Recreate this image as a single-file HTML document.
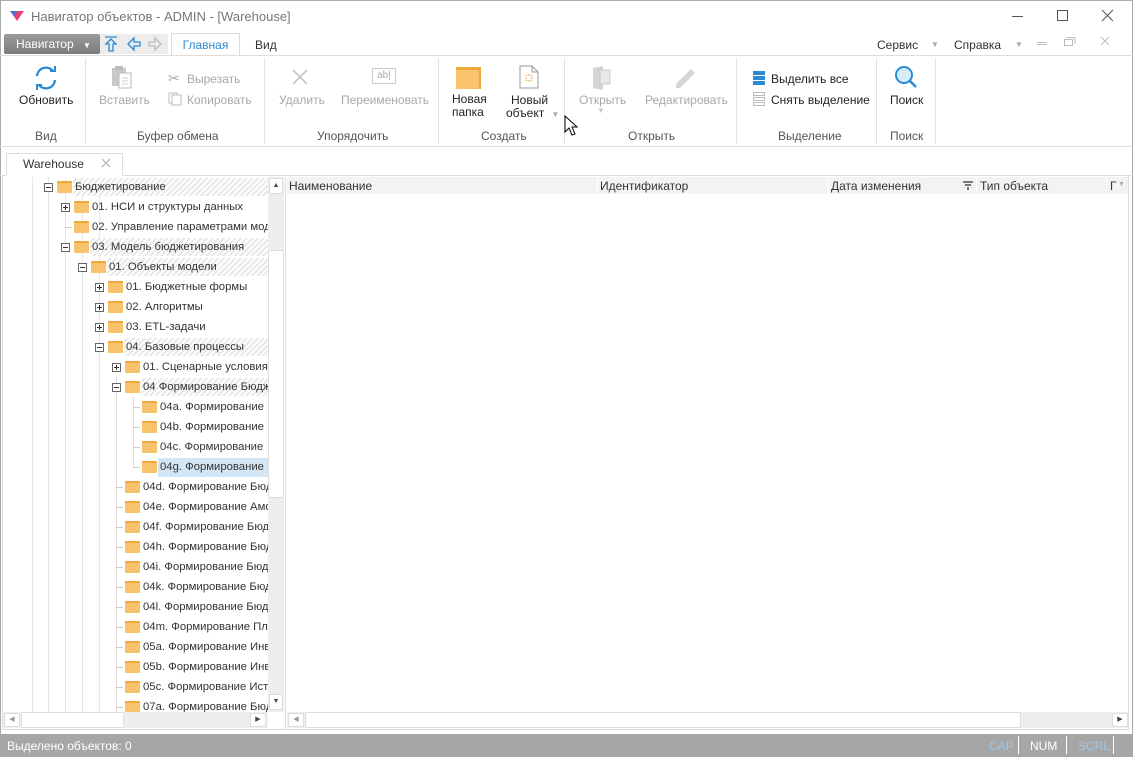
<!DOCTYPE html>
<html><head><meta charset="utf-8"><style>
*{margin:0;padding:0;box-sizing:border-box}
body{width:1133px;height:757px;overflow:hidden;background:#fff;font-family:"Liberation Sans","DejaVu Sans",sans-serif;font-size:12px;color:#333;position:relative}
.a{position:absolute;white-space:nowrap}
.g{color:#a8a8a8}
.lbl{color:#555}
.vl{position:absolute;width:1px;background:#e3e3e3}
.row{position:absolute;height:20px;line-height:20px;white-space:nowrap;font-size:11.3px}
.fold{position:absolute;width:15px;height:12px;background:#f8c36a;border-top:2px solid #f2a73a;border-radius:1px}
.exp{position:absolute;width:9px;height:9px;border:1px solid #666;background:#fff}
.exp:before{content:"";position:absolute;left:1px;top:3px;width:5px;height:1px;background:#333}
.exp.p:after{content:"";position:absolute;left:3px;top:1px;width:1px;height:5px;background:#333}
.hat{position:absolute;height:18px;background:repeating-linear-gradient(135deg,#fff 0 2px,#e8e8e8 2px 4px)}
</style></head><body>
<div class="a" style="left:0;top:0;width:1133px;height:757px;border:1px solid #aaa"></div>
<svg class="a" style="left:10px;top:10px" width="14" height="12"><polygon points="0,1 14,1 7,11" fill="#e8426b"/><polygon points="0,1 7,1 5,7" fill="#4a6fd6"/></svg>
<div class="a" style="left:31px;top:9px;font-size:13px;color:#777">Навигатор объектов - ADMIN - [Warehouse]</div>
<svg class="a" style="left:1005px;top:4px" width="120" height="24" stroke="#555" fill="none" stroke-width="1"><path d="M7 12.5h11"/><rect x="52.5" y="6.5" width="10" height="10"/><path d="M97 6l11 11M108 6l-11 11"/></svg>
<div class="a" style="left:4px;top:34px;width:96px;height:20px;background:linear-gradient(#9a9a9a,#7c7c7c);border-radius:2px;color:#fff;line-height:20px;padding-left:12px;font-size:12px">Навигатор <span style="font-size:8px;margin-left:6px">▼</span></div>
<div class="a" style="left:100px;top:34px;width:68px;height:20px;background:#ececec"></div>
<svg class="a" style="left:103px;top:35px" width="66" height="18" fill="none" stroke-width="1.3">
<path d="M2 2h12M8 4l-5 5h3v7h4v-7h3z" stroke="#2b8ad4"/>
<path d="M25 9l6-6v4h6v4h-6v4z" stroke="#2b8ad4"/>
<path d="M58 9l-6-6v4h-6v4h6v4z" stroke="#bbb"/>
</svg>
<div class="a" style="left:171px;top:33px;width:69px;height:23px;border:1px solid #ddd;border-bottom:none;background:#fff;color:#2b8ad4;text-align:center;line-height:22px">Главная</div>
<div class="a" style="left:255px;top:38px">Вид</div>
<div class="a" style="left:877px;top:38px">Сервис</div><div class="a" style="left:931px;top:40px;font-size:8px;color:#aaa">▼</div>
<div class="a" style="left:954px;top:38px">Справка</div><div class="a" style="left:1015px;top:40px;font-size:8px;color:#aaa">▼</div>
<svg class="a" style="left:1034px;top:34px" width="80" height="16" stroke="#bbb" fill="none"><path d="M3.5 8.5h9M3.5 10.5h9"/><rect x="30.5" y="5.5" width="8" height="6"/><path d="M33 3.5h8v6"/><path d="M67 3l8 8M75 3l-8 8"/></svg>
<div class="a" style="left:0;top:55px;width:1133px;height:1px;background:#ddd"></div>
<div class="vl" style="left:85px;top:58px;height:86px"></div>
<div class="vl" style="left:264px;top:58px;height:86px"></div>
<div class="vl" style="left:438px;top:58px;height:86px"></div>
<div class="vl" style="left:564px;top:58px;height:86px"></div>
<div class="vl" style="left:736px;top:58px;height:86px"></div>
<div class="vl" style="left:876px;top:58px;height:86px"></div>
<div class="vl" style="left:935px;top:58px;height:86px"></div>
<div class="a" style="left:0;top:146px;width:1133px;height:1px;background:#ddd"></div>
<svg class="a" style="left:33px;top:65px" width="26" height="26" fill="none" stroke="#2b8ad4" stroke-width="2.2"><path d="M4 11a9 9 0 0 1 16-5"/><path d="M22 15a9 9 0 0 1-16 5"/><path d="M17 6h5V1" stroke-width="2"/><path d="M9 20H4v5" stroke-width="2"/></svg>
<div class="a" style="left:19px;top:93px;color:#222">Обновить</div>
<div class="a lbl" style="left:35px;top:129px">Вид</div>
<svg class="a" style="left:111px;top:65px" width="22" height="24"><rect x="1" y="3" width="14" height="18" fill="#c8c8c8"/><rect x="4" y="1" width="8" height="4" fill="#bbb"/><rect x="8" y="8" width="12" height="15" fill="#fff" stroke="#bbb"/><path d="M11 13h6M11 16h6M11 19h6" stroke="#ccc"/></svg>
<div class="a g" style="left:99px;top:93px">Вставить</div>
<div class="a g" style="left:168px;top:70px;font-size:14px">✂</div><div class="a g" style="left:187px;top:72px">Вырезать</div>
<svg class="a" style="left:168px;top:92px" width="14" height="14" fill="#fff" stroke="#bbb"><rect x="1" y="1" width="8" height="10"/><rect x="4" y="3" width="9" height="10"/></svg><div class="a g" style="left:187px;top:93px">Копировать</div>
<div class="a lbl" style="left:137px;top:129px">Буфер обмена</div>
<svg class="a" style="left:291px;top:68px" width="18" height="18" stroke="#c4c4c4" stroke-width="1.6"><path d="M2 2l14 14M16 2L2 16"/></svg>
<div class="a g" style="left:279px;top:93px">Удалить</div>
<div class="a" style="left:372px;top:68px;width:24px;height:16px;border:1px solid #ccc;color:#aaa;font-size:10px;text-align:center;line-height:14px">ab|</div>
<div class="a g" style="left:341px;top:93px">Переименовать</div>
<div class="a lbl" style="left:317px;top:129px">Упорядочить</div>
<div class="a" style="left:456px;top:67px;width:25px;height:22px;background:#f8c36a;border-top:3px solid #f2a73a;border-right:2px solid #f2a73a"></div>
<div class="a" style="left:452px;top:93px;color:#222;line-height:13px">Новая<br>папка</div>
<svg class="a" style="left:519px;top:65px" width="20" height="24"><path d="M1 1h12l6 6v16H1z" fill="#fff" stroke="#999"/><path d="M13 1v6h6" fill="none" stroke="#999"/><path d="M10 9v2M10 15v2M6 13h2M12 13h2M7 10l1 1M13 10l-1 1M7 16l1-1M13 16l-1-1" stroke="#f2a73a"/></svg>
<div class="a" style="left:511px;top:93px;color:#222">Новый</div>
<div class="a" style="left:506px;top:106px;color:#222">объект <span style="font-size:8px;color:#aaa;margin-left:4px">▼</span></div>
<div class="a lbl" style="left:481px;top:129px">Создать</div>
<svg class="a" style="left:564px;top:115px" width="14" height="22"><path d="M1 1v16l4-4 3 7 3-1-3-7h5z" fill="#fff" stroke="#000"/></svg>
<svg class="a" style="left:591px;top:65px" width="22" height="26"><path d="M2 3l10-2v24l-10-2z" fill="#d5d5d5"/><rect x="9" y="5" width="10" height="14" fill="#e8e8e8" stroke="#ccc"/></svg>
<div class="a g" style="left:579px;top:93px">Открыть</div>
<div class="a g" style="left:597px;top:106px;font-size:8px;color:#ccc">▼</div>
<svg class="a" style="left:672px;top:64px" width="28" height="26"><path d="M4 20L19 5l4 4L8 24H4z" fill="#d5d5d5"/></svg>
<div class="a g" style="left:645px;top:93px">Редактировать</div>
<div class="a lbl" style="left:628px;top:129px">Открыть</div>
<div class="a" style="left:753px;top:71px;width:12px;height:4px;background:#2b8ad4;box-shadow:0 5px 0 #2b8ad4,0 10px 0 #2b8ad4"></div>
<div class="a" style="left:771px;top:72px;color:#222">Выделить все</div>
<div class="a" style="left:753px;top:92px;width:12px;height:4px;border:1px solid #bbb"></div>
<div class="a" style="left:753px;top:97px;width:12px;height:4px;border:1px solid #bbb"></div>
<div class="a" style="left:753px;top:102px;width:12px;height:4px;border:1px solid #bbb"></div>
<div class="a" style="left:771px;top:93px;color:#222">Снять выделение</div>
<div class="a lbl" style="left:778px;top:129px">Выделение</div>
<svg class="a" style="left:893px;top:64px" width="26" height="26"><circle cx="11" cy="11" r="8" fill="#d8ebf8" stroke="#2b8ad4" stroke-width="2"/><path d="M17 17l6 6" stroke="#2b8ad4" stroke-width="2.5"/></svg>
<div class="a" style="left:890px;top:93px;color:#222">Поиск</div>
<div class="a lbl" style="left:890px;top:129px">Поиск</div>
<div class="a" style="left:0;top:175px;width:1133px;height:1px;background:#ddd"></div>
<div class="a" style="left:6px;top:153px;width:117px;height:23px;border:1px solid #ddd;border-bottom:1px solid #fff;background:#fff"></div>
<div class="a" style="left:23px;top:157px;color:#333">Warehouse</div>
<svg class="a" style="left:101px;top:158px" width="10" height="10" stroke="#aaa"><path d="M1 1l8 8M9 1l-8 8"/></svg>
<div class="a" style="left:2px;top:176px;width:1px;height:553px;background:#ddd"></div>
<div class="a" style="left:1128px;top:176px;width:1px;height:553px;background:#ddd"></div>
<div id="tree" class="a" style="left:3px;top:177px;width:265px;height:535px;overflow:hidden"></div>
<div class="a" style="left:268px;top:177px;width:16px;height:535px;background:#eee"></div>
<div class="a" style="left:269px;top:178px;width:14px;height:16px;background:#fff;border:1px solid #ddd;font-size:7px;text-align:center;line-height:14px;color:#444">▲</div>
<div class="a" style="left:268px;top:250px;width:16px;height:248px;background:#fff;border:1px solid #ddd;border-radius:2px"></div>
<div class="a" style="left:269px;top:694px;width:14px;height:16px;background:#fff;border:1px solid #ddd;font-size:7px;text-align:center;line-height:14px;color:#444">▼</div>
<div class="a" style="left:285px;top:177px;width:1px;height:552px;background:#ddd"></div>
<div class="a" style="left:3px;top:712px;width:265px;height:16px;background:#eee"></div>
<div class="a" style="left:4px;top:713px;width:16px;height:14px;background:#fff;border:1px solid #ddd;font-size:7px;line-height:12px;text-align:center;color:#999">◀</div>
<div class="a" style="left:21px;top:712px;width:103px;height:16px;background:#fff;border:1px solid #ddd;border-radius:2px"></div>
<div class="a" style="left:250px;top:713px;width:16px;height:14px;background:#fff;border:1px solid #ddd;font-size:7px;line-height:12px;text-align:center;color:#444">▶</div>
<div class="a" style="left:287px;top:177px;width:841px;height:17px;background:#f3f3f3"></div>
<div class="a" style="left:597px;top:177px;width:1px;height:17px;background:#fff"></div>
<div class="a" style="left:827px;top:177px;width:1px;height:17px;background:#fff"></div>
<div class="a" style="left:976px;top:177px;width:1px;height:17px;background:#fff"></div>
<div class="a" style="left:1106px;top:177px;width:1px;height:17px;background:#fff"></div>
<div class="a" style="left:289px;top:179px">Наименование</div>
<div class="a" style="left:600px;top:179px">Идентификатор</div>
<div class="a" style="left:831px;top:179px">Дата изменения</div>
<svg class="a" style="left:963px;top:181px" width="10" height="9" fill="#777"><path d="M0 0h10v2H0zM2 3h6v2H2zM4 6h2v3H4z"/></svg>
<div class="a" style="left:980px;top:179px">Тип объекта</div>
<div class="a" style="left:1110px;top:179px">Г</div><div class="a" style="left:1118px;top:181px;font-size:7px;color:#aaa">▼</div>
<div class="a" style="left:287px;top:712px;width:841px;height:16px;background:#eee"></div>
<div class="a" style="left:288px;top:713px;width:16px;height:14px;background:#fff;border:1px solid #ddd;font-size:7px;line-height:12px;text-align:center;color:#999">◀</div>
<div class="a" style="left:305px;top:712px;width:716px;height:16px;background:#fff;border:1px solid #ddd;border-radius:2px"></div>
<div class="a" style="left:1112px;top:713px;width:16px;height:14px;background:#fff;border:1px solid #ddd;font-size:7px;line-height:12px;text-align:center;color:#444">▶</div>
<div class="a" style="left:3px;top:729px;width:1126px;height:1px;background:#ddd"></div>
<div class="a" style="left:0;top:734px;width:1133px;height:23px;background:#a6a6a6"></div>
<div class="a" style="left:7px;top:739px;color:#fff">Выделено объектов: 0</div>
<div class="a" style="left:989px;top:739px;color:#9fc6e6">CAP</div>
<div class="a" style="left:1018px;top:736px;width:1px;height:18px;background:#fff"></div>
<div class="a" style="left:1030px;top:739px;color:#fff">NUM</div>
<div class="a" style="left:1066px;top:736px;width:1px;height:18px;background:#fff"></div>
<div class="a" style="left:1078px;top:739px;color:#9fc6e6">SCRL</div>
<div class="a" style="left:1113px;top:736px;width:1px;height:18px;background:#fff"></div>
<script>
var rows=[
[0,'m','Бюджетирование',1],[1,'p','01. НСИ и структуры данных'],[1,'','02. Управление параметрами модели'],
[1,'m','03. Модель бюджетирования',1],[2,'m','01. Объекты модели',1],[3,'p','01. Бюджетные формы'],
[3,'p','02. Алгоритмы'],[3,'p','03. ETL-задачи'],[3,'m','04. Базовые процессы',1],
[4,'p','01. Сценарные условия'],[4,'m','04 Формирование Бюджета',1],
[5,'','04a. Формирование'],[5,'','04b. Формирование'],[5,'','04c. Формирование'],[5,'','04g. Формирование',2],
[4,'','04d. Формирование Бюджета'],[4,'','04e. Формирование Амортизации'],[4,'','04f. Формирование Бюджета'],
[4,'','04h. Формирование Бюджета'],[4,'','04i. Формирование Бюджета'],[4,'','04k. Формирование Бюджета'],
[4,'','04l. Формирование Бюджета'],[4,'','04m. Формирование Плана'],[4,'','05a. Формирование Инвестиций'],
[4,'','05b. Формирование Инвестиций'],[4,'','05c. Формирование Источников'],[4,'','07a. Формирование Бюджета']];
var h='';
[29,45,62,79,96].forEach(function(x){h+='<div class="vl" style="left:'+x+'px;top:0;height:535px;background:#e6e6e6"></div>'});
h+='<div class="vl" style="left:113px;top:200px;height:335px;background:#ddd"></div>';
h+='<div class="vl" style="left:130px;top:220px;height:70px;background:#ddd"></div>';
rows.forEach(function(r,i){
 var L=r[0],y=i*20,ex=45+17*L,fx=54+17*L,tx=fx+18;
 if(r[3]==1)h+='<div class="hat" style="left:'+(tx-2)+'px;top:'+(y+1)+'px;width:'+(265-tx+2)+'px"></div>';
 if(r[3]==2)h+='<div class="a" style="left:'+(tx-2)+'px;top:'+(y+1)+'px;width:'+(265-tx+2)+'px;height:19px;background:#d3e6f5"></div>';
 if(r[1])h+='<div class="exp '+r[1]+'" style="left:'+(ex-4)+'px;top:'+(y+6)+'px"></div>';
 else h+='<div class="a" style="left:'+(ex)+'px;top:'+(y+10)+'px;width:7px;height:1px;background:#ccc"></div>';
 h+='<div class="fold" style="left:'+fx+'px;top:'+(y+4)+'px"></div>';
 h+='<div class="row" style="left:'+tx+'px;top:'+y+'px;color:#333">'+r[2]+'</div>';
});
document.getElementById('tree').innerHTML=h;
</script>
</body></html>
